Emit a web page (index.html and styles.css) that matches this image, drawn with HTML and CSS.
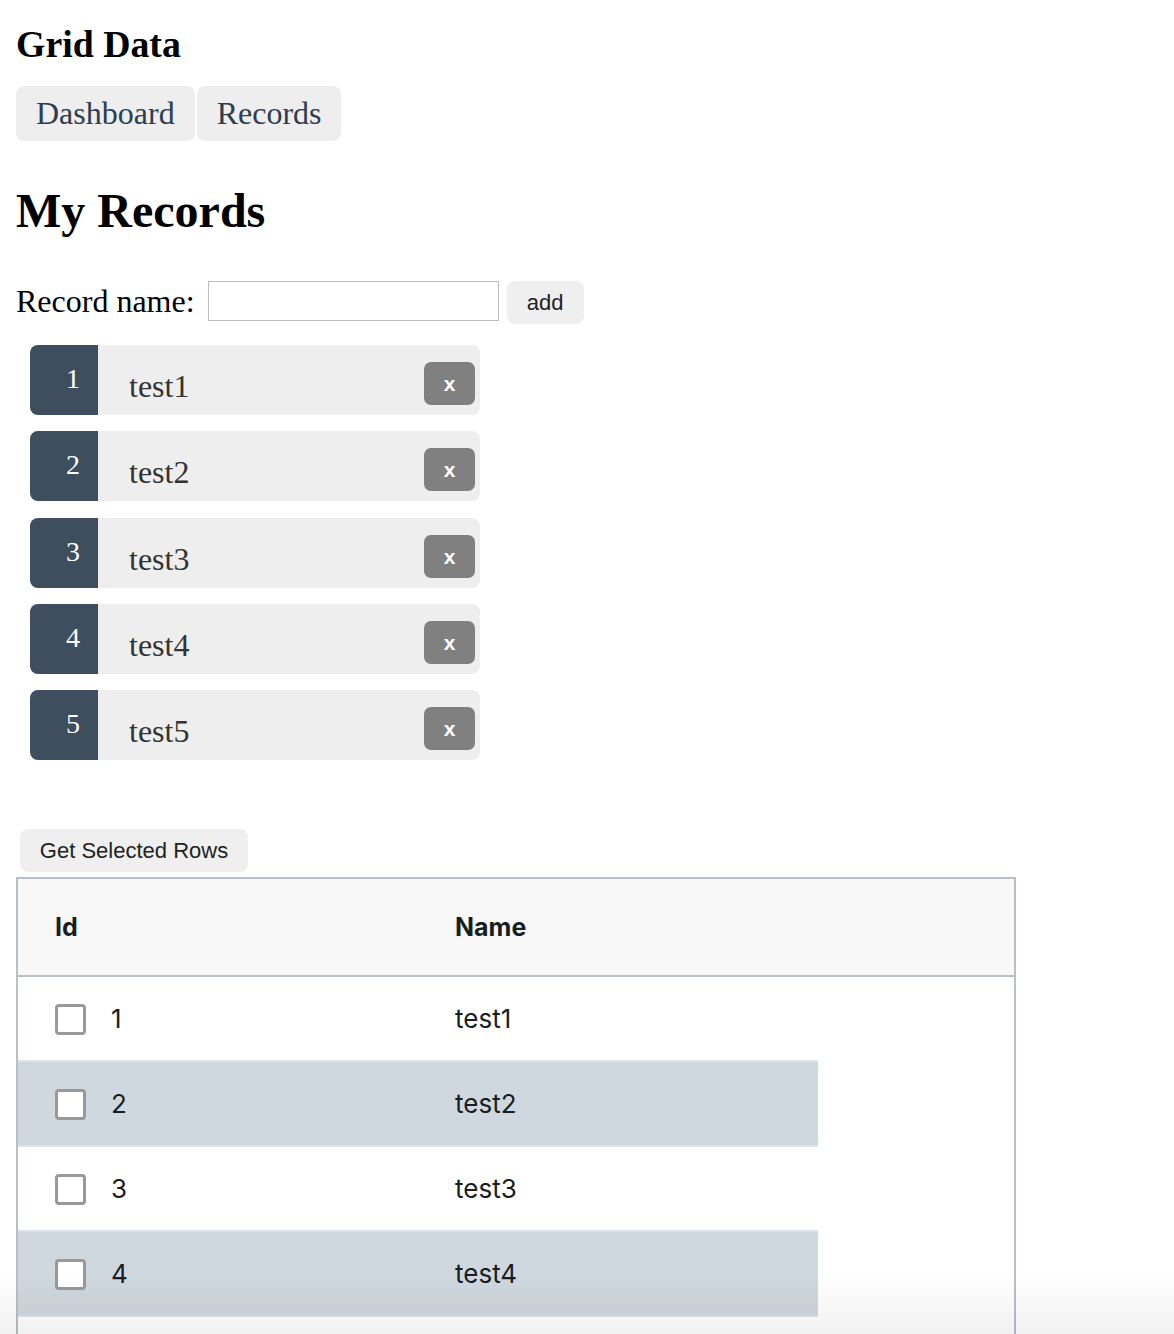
FILE: index.html
```html
<!DOCTYPE html>
<html>
<head>
<meta charset="utf-8">
<title>Grid Data</title>
<link rel="stylesheet" href="styles.css">
</head>
<body>
<h3 class="app-title">Grid Data</h3>
<nav class="nav">
  <a class="nav-btn">Dashboard</a>
  <a class="nav-btn">Records</a>
</nav>
<h2 class="page-title">My Records</h2>
<div class="add-form">
  <label class="add-label">Record name:</label>
  <input class="add-input" type="text">
  <button class="btn add-btn">add</button>
</div>
<ul class="records">
  <li class="record"><span class="badge">1</span><span class="record-name">test1</span><button class="del">x</button></li>
  <li class="record"><span class="badge">2</span><span class="record-name">test2</span><button class="del">x</button></li>
  <li class="record"><span class="badge">3</span><span class="record-name">test3</span><button class="del">x</button></li>
  <li class="record"><span class="badge">4</span><span class="record-name">test4</span><button class="del">x</button></li>
  <li class="record"><span class="badge">5</span><span class="record-name">test5</span><button class="del">x</button></li>
</ul>
<button class="btn sel-btn">Get Selected Rows</button>
<div class="grid">
  <div class="grid-header">
    <div class="hcell">Id</div>
    <div class="hcell">Name</div>
  </div>
  <div class="grid-row">
    <div class="cell"><span class="cb"></span><span>1</span></div>
    <div class="cell">test1</div>
  </div>
  <div class="grid-row odd">
    <div class="cell"><span class="cb"></span><span>2</span></div>
    <div class="cell">test2</div>
  </div>
  <div class="grid-row">
    <div class="cell"><span class="cb"></span><span>3</span></div>
    <div class="cell">test3</div>
  </div>
  <div class="grid-row odd">
    <div class="cell"><span class="cb"></span><span>4</span></div>
    <div class="cell">test4</div>
  </div>
</div>
<div class="bottom-fade"></div>
</body>
</html>
```
FILE: styles.css
```css
html, body {
  margin: 0;
  padding: 0;
  background: #fff;
}
body {
  padding: 0 16px;
  font-family: "Liberation Serif", "Times New Roman", serif;
  color: #000;
  overflow: hidden;
  height: 1334px;
}
.app-title {
  margin: 23px 0 0;
  font-size: 37.8px;
  line-height: 42px;
  font-weight: bold;
}
.nav {
  display: flex;
  gap: 2px;
  margin-top: 21px;
}
.nav-btn {
  display: block;
  background: #eeeeee;
  color: #2c3e50;
  font-size: 32px;
  line-height: 35px;
  padding: 10px 20px;
  border-radius: 8px;
}
.page-title {
  margin: 42px 0 0;
  font-size: 48px;
  line-height: 55px;
  font-weight: bold;
}
.add-form {
  display: flex;
  align-items: flex-start;
  margin-top: 43px;
}
.add-label {
  font-size: 32px;
  line-height: 40px;
  margin-right: 13px;
}
.add-input {
  box-sizing: border-box;
  width: 291px;
  height: 40px;
  margin: 0;
  border: 1px solid #bdbdbd;
  background: #fff;
}
.btn {
  font-family: "Liberation Sans", Arial, sans-serif;
  font-size: 22px;
  line-height: 23px;
  color: #222;
  background: #efefef;
  border: none;
  border-radius: 8px;
  margin: 0;
}
.add-btn {
  margin-left: 8px;
  width: 77px;
  height: 43px;
  padding: 0;
}
.records {
  list-style: none;
  margin: 21px 0 0 14px;
  padding: 0;
  width: 450px;
}
.record {
  display: flex;
  align-items: flex-start;
  height: 70px;
  margin-bottom: 16.25px;
  background: #eeeeee;
  border-radius: 8px;
}
.record:last-child {
  margin-bottom: 0;
}
.badge {
  box-sizing: border-box;
  width: 68px;
  height: 70px;
  background: #3e4e5f;
  color: #fff;
  font-size: 28px;
  line-height: 32px;
  padding: 18px 0 0 36px;
  border-radius: 8px 0 0 8px;
}
.record-name {
  flex: 1;
  font-size: 32px;
  line-height: 36px;
  padding: 23px 0 0 31px;
  color: #333;
}
.del {
  margin: 17px 5px 0 0;
  width: 51px;
  height: 43px;
  padding: 0;
  border: none;
  border-radius: 7px;
  background: #808080;
  color: #fff;
  font-family: "Liberation Sans", Arial, sans-serif;
  font-weight: bold;
  font-size: 21px;
  line-height: 23px;
}
.sel-btn {
  display: block;
  margin: 69px 0 0 4px;
  width: 228px;
  height: 43px;
  padding: 0;
}
.grid {
  margin-top: 5px;
  width: 1000px;
  min-height: 520px;
  box-sizing: border-box;
  border: 2px solid #babfc7;
  border-bottom: none;
  font-family: Inter, "Noto Sans", sans-serif;
  color: #181d1f;
}
.grid-header {
  display: flex;
  height: 96px;
  background: #f8f8f8;
  border-bottom: 2px solid #babfc7;
}
.hcell {
  box-sizing: border-box;
  width: 400px;
  padding-left: 37px;
  display: flex;
  align-items: center;
  font-size: 25px;
  font-weight: 700;
}
.grid-row {
  display: flex;
  width: 800px;
  height: 83px;
  border-bottom: 2px solid #dde2eb;
  background: #fff;
}
.grid-row.odd {
  background: #d0d8df;
}
.cell {
  box-sizing: border-box;
  width: 400px;
  padding-left: 37px;
  display: flex;
  align-items: center;
  font-size: 26px;
}
.cb {
  box-sizing: border-box;
  width: 31px;
  height: 31px;
  border: 3px solid #999;
  border-radius: 4px;
  background: #fff;
  margin: 2px 25px 0 0;
}
.bottom-fade {
  position: fixed;
  left: 0;
  right: 0;
  bottom: 0;
  height: 60px;
  pointer-events: none;
  background: linear-gradient(to bottom, rgba(0,0,0,0) 0%, rgba(0,0,0,0.055) 100%);
}
```
